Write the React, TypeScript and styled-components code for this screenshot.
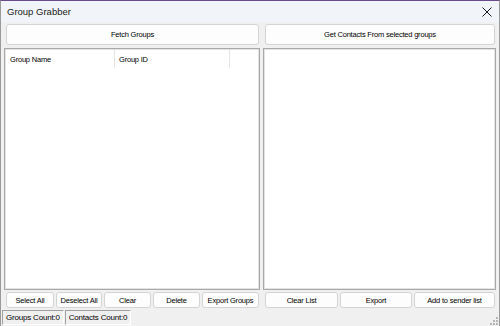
import React from 'react'
import styled, { createGlobalStyle } from 'styled-components'

const Global = createGlobalStyle`
  html, body { margin: 0; padding: 0; background: #f0f0f0; }
  * { box-sizing: border-box; }
`

export default function App () {
  return (
    <Window>
      <Global />
      <TitleBar>
        <Title>Group Grabber</Title>
        <CloseBtn>
          <svg width="10" height="10" viewBox="0 0 10 10">
            <path d="M0.5 0.5 L9.5 9.5 M9.5 0.5 L0.5 9.5" stroke="#1a1a1a" strokeWidth="1" />
          </svg>
        </CloseBtn>
      </TitleBar>
      <Body>
        <Pane>
          <WideButton>Fetch Groups</WideButton>
          <ListBox>
            <Header>
              <HeaderCell $w={109}>Group Name</HeaderCell>
              <HeaderCell $w={115}>Group ID</HeaderCell>
            </Header>
          </ListBox>
          <ButtonRow>
            <SmallButton $w={48}>Select All</SmallButton>
            <SmallButton $w={46}>Deselect All</SmallButton>
            <SmallButton $w={47}>Clear</SmallButton>
            <SmallButton $w={47}>Delete</SmallButton>
            <SmallButton $w={57}>Export Groups</SmallButton>
          </ButtonRow>
        </Pane>
        <Pane $right>
          <WideButton>Get Contacts From selected groups</WideButton>
          <ListBox />
          <ButtonRow>
            <SmallButton $w={73}>Clear List</SmallButton>
            <SmallButton $w={72}>Export</SmallButton>
            <SmallButton $w={81}>Add to sender list</SmallButton>
          </ButtonRow>
        </Pane>
      </Body>
      <StatusBar>
        <StatusPanel>Groups Count:0</StatusPanel>
        <StatusPanel>Contacts Count:0</StatusPanel>
        <Grip>
          <svg width="8" height="8" viewBox="0 0 8 8">
            <rect x="6" y="0" width="2" height="2" fill="#b5b5b5" />
            <rect x="3" y="3" width="2" height="2" fill="#b5b5b5" />
            <rect x="6" y="3" width="2" height="2" fill="#b5b5b5" />
            <rect x="0" y="6" width="2" height="2" fill="#b5b5b5" />
            <rect x="3" y="6" width="2" height="2" fill="#b5b5b5" />
            <rect x="6" y="6" width="2" height="2" fill="#b5b5b5" />
          </svg>
        </Grip>
      </StatusBar>
    </Window>
  )
}

const Window = styled.div`
  width: 500px;
  height: 326px;
  display: flex;
  flex-direction: column;
  background: #f0f0f0;
  border-top: 1px solid #6a4c8c;
  border-left: 1px solid #9a9a9a;
  border-right: 1px solid #9a9a9a;
  overflow: hidden;
  font-family: "Liberation Sans", Arial, sans-serif;
  color: #000;
`
const TitleBar = styled.div`
  height: 21px;
  flex: none;
  display: flex;
  align-items: center;
  justify-content: space-between;
  padding: 0 6px;
  background: #f1f5f9;
`
const Title = styled.span`
  font-size: 9.5px;
  color: #1a1a1a;
`
const CloseBtn = styled.span`
  display: flex;
  align-items: center;
  margin-right: 1px;
`
const Body = styled.div`
  flex: 1;
  display: grid;
  grid-template-columns: 256px 234px;
  column-gap: 2px;
  padding: 2px 4px 0 3px;
`
const Pane = styled.div<{ $right?: boolean }>`
  display: flex;
  flex-direction: column;
  padding-left: ${p => (p.$right ? '1px' : '0')};
`
const ButtonBase = styled.div`
  display: flex;
  align-items: center;
  justify-content: center;
  background: #fdfdfd;
  border: 1px solid #d4d4d4;
  border-radius: 3px;
  font-size: 7.5px;
  letter-spacing: -0.2px;
  color: #000;
  white-space: nowrap;
`
const WideButton = styled(ButtonBase)`
  height: 21px;
  margin: 0 1px 0 2px;
`
const ListBox = styled.div`
  height: 242px;
  margin-top: 3px;
  background: #fff;
  border: 1px solid #a8a8a8;
  box-shadow: inset 1px 1px 0 #e3e3e3, inset -1px -1px 0 #e3e3e3;
`
const Header = styled.div`
  display: flex;
  height: 19px;
  padding: 1px 0 0 1px;
`
const HeaderCell = styled.div<{ $w: number }>`
  width: ${p => p.$w}px;
  display: flex;
  align-items: center;
  padding-left: 4px;
  font-size: 7.5px;
  letter-spacing: -0.2px;
  color: #000;
  border-right: 1px solid #e5e5e5;
`
const ButtonRow = styled.div`
  display: flex;
  gap: 2px;
  margin-top: 2px;
  padding-left: 2px;
`
const SmallButton = styled(ButtonBase)<{ $w: number }>`
  width: ${p => p.$w}px;
  height: 16px;
`
const StatusBar = styled.div`
  height: 18px;
  flex: none;
  display: flex;
  align-items: stretch;
  padding: 2px 0 1px 1px;
  gap: 1px;
  background: #f0f0f0;
  position: relative;
`
const StatusPanel = styled.div`
  display: flex;
  align-items: center;
  padding: 0 3px;
  font-size: 8px;
  letter-spacing: -0.2px;
  color: #000;
  border: 1px solid #a0a0a0;
  border-right-color: #fff;
  border-bottom-color: #fff;
`
const Grip = styled.div`
  position: absolute;
  right: 1px;
  bottom: 1px;
  display: flex;
`
